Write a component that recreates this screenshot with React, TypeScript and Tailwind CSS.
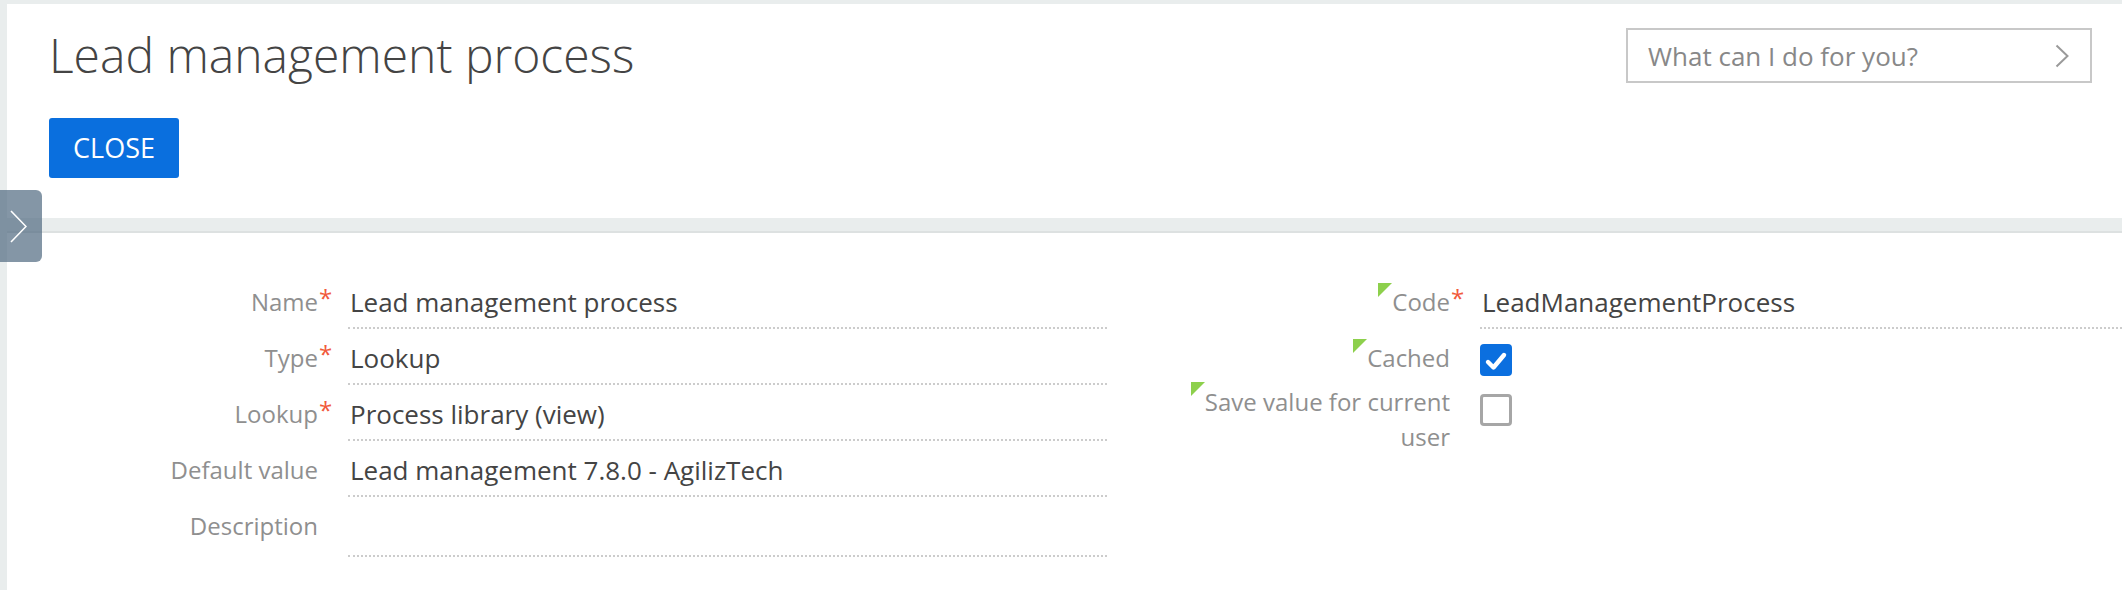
import React from 'react';

type FieldRow = {
  label: string;
  required?: boolean;
  value?: string;
  tall?: boolean;
};

const leftRows: FieldRow[] = [
  { label: 'Name', required: true, value: 'Lead management process' },
  { label: 'Type', required: true, value: 'Lookup' },
  { label: 'Lookup', required: true, value: 'Process library (view)' },
  { label: 'Default value', value: 'Lead management 7.8.0 - AgilizTech' },
  { label: 'Description', value: '', tall: true },
];

function Corner({ className }: { className: string }) {
  return (
    <svg className={className} width="14" height="14" viewBox="0 0 14 14">
      <polygon points="0,0 14,0 0,14" fill="#8dd04c" />
    </svg>
  );
}

function Star({ show }: { show?: boolean }) {
  return (
    <div className="w-[30px] shrink-0 pl-[1px] text-[24px] leading-[32px] text-[#f15a3b]">
      {show ? '*' : ''}
    </div>
  );
}

function Label({ children, marked }: { children: React.ReactNode; marked?: boolean }) {
  return (
    <div className="flex w-[280px] shrink-0 justify-end">
      <div className="relative text-right text-[24px] leading-[40px] text-[#8f8f8f]">
        {marked && <Corner className="absolute -left-[14px] top-[1px]" />}
        {children}
      </div>
    </div>
  );
}

function TextRow({ row, marked }: { row: FieldRow; marked?: boolean }) {
  return (
    <div className={row.tall ? 'flex h-[60px]' : 'flex h-[56px]'}>
      <Label marked={marked}>{row.label}</Label>
      <Star show={row.required} />
      <div
        className={
          (row.tall ? 'h-[51px] ' : 'h-[47px] ') +
          'min-w-0 flex-1 border-b-2 border-dotted border-[#cccccc] pl-[2px] text-[26px] leading-[40px] text-[#444]'
        }
      >
        {row.value}
      </div>
    </div>
  );
}

function CheckBox({ checked }: { checked?: boolean }) {
  if (checked) {
    return (
      <div className="flex h-[32px] w-[32px] items-center justify-center rounded-[4px] bg-[#0b6fdf]">
        <svg width="32" height="32" viewBox="0 0 32 32">
          <polyline points="8,18 13.5,23.5 24,11" fill="none" stroke="#fff" strokeWidth="4.4" strokeLinecap="round" strokeLinejoin="round" />
        </svg>
      </div>
    );
  }
  return <div className="h-[32px] w-[32px] rounded-[4px] border-[3px] border-[#a6a6a6] bg-white" />;
}

export default function App() {
  return (
    <div className="relative h-[590px] w-full overflow-hidden bg-[#e9eded] pl-[7px] pt-[4px] font-['Open_Sans',sans-serif]">
      <header className="h-[214px] bg-white pl-[42px] pr-[30px] pt-[21px]">
        <div className="flex items-start justify-between">
          <h1 className="text-[48px] font-light leading-[60px] text-[#444]">Lead management process</h1>
          <div className="mt-[3px] flex h-[55px] w-[466px] items-center justify-between border-2 border-[#c8c8c8] pl-[20px] pr-[21px]">
            <span className="text-[26px] leading-none text-[#888]">What can I do for you?</span>
            <svg width="14" height="24" viewBox="0 0 14 24">
              <polyline points="1.5,1.5 12.5,12 1.5,22.5" fill="none" stroke="#9a9a9a" strokeWidth="2" />
            </svg>
          </div>
        </div>
        <button className="mt-[33px] h-[60px] w-[130px] rounded-[3px] bg-[#0a6fde] text-[27px] text-white">
          CLOSE
        </button>
      </header>

      <main className="mt-[13px] h-full border-t-2 border-[#dde1e1] bg-white pl-[31px] pt-[49px]">
        <div className="grid grid-cols-[1069px_1fr] gap-x-[63px]">
          <div>
            {leftRows.map((row) => (
              <TextRow key={row.label} row={row} />
            ))}
          </div>
          <div>
            <TextRow row={{ label: 'Code', required: true, value: 'LeadManagementProcess' }} marked />
            <div className="flex h-[46px]">
              <Label marked>Cached</Label>
              <Star />
              <div className="pt-[6px]">
                <CheckBox checked />
              </div>
            </div>
            <div className="flex">
              <div className="flex w-[280px] shrink-0 justify-end">
                <div className="relative text-right text-[24px] leading-[35px] text-[#8f8f8f]">
                  <Corner className="absolute -left-[14px] -top-[2px]" />
                  Save value for current
                  <br />
                  user
                </div>
              </div>
              <Star />
              <div className="pt-[10px]">
                <CheckBox />
              </div>
            </div>
          </div>
        </div>
      </main>

      <div className="absolute left-0 top-[190px] flex h-[72px] w-[42px] items-center rounded-r-[6px] bg-[rgba(80,105,128,0.7)] pl-[10px]">
        <svg width="17" height="33" viewBox="0 0 17 33">
          <polyline points="1,1 16,16.5 1,32" fill="none" stroke="#fff" strokeWidth="1.6" />
        </svg>
      </div>
    </div>
  );
}
